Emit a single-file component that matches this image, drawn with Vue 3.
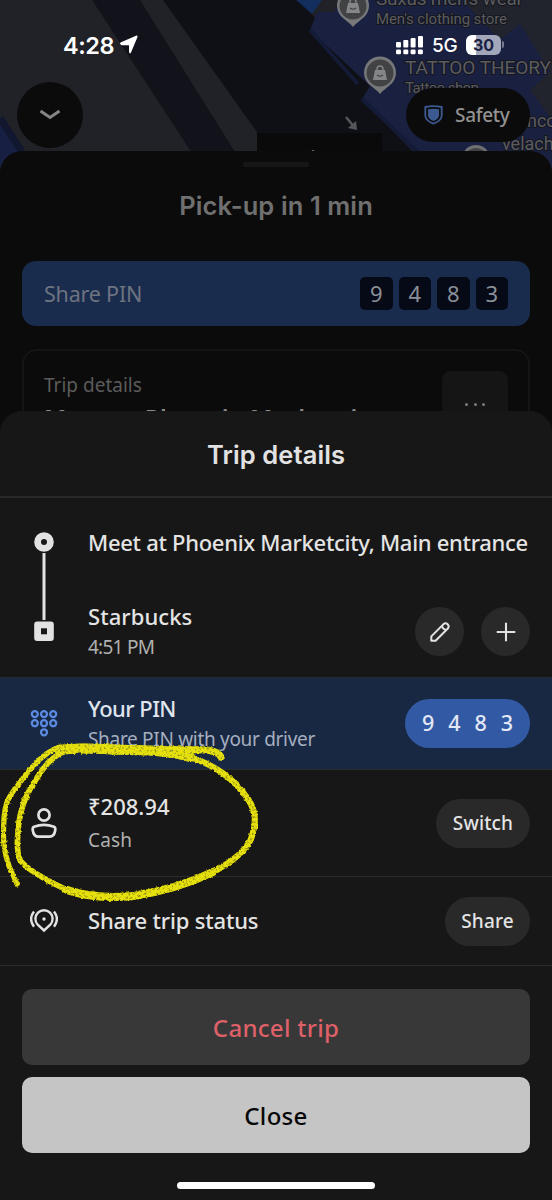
<script setup>
const pin = ['9', '4', '8', '3']
</script>

<template>
  <div class="screen">
    <svg class="map" viewBox="0 0 552 190" width="552" height="190">
      <rect width="552" height="190" fill="#202227" />
      <path d="M92 0H140L240 160V190H216Z" fill="#12131a" />
      <path d="M163 0H300L440 170H284Z" fill="#0e1015" />
      <path d="M0 118L24 152V190H0Z" fill="#171f42" />
      <path d="M0 118L22 152" stroke="#11172f" stroke-width="7" />
      <path d="M296 0H322L312 14L303 6Z" fill="#132d5c" />
      <path d="M318 10L328 0H525L552 30V190H450L362 99L370 86L310 30Z" fill="#1a2040" />
      <path d="M310 30L358 84M362 99L418 152" fill="none" stroke="#141b36" stroke-width="4" />
      <path d="M322 0H340L334 12L318 12Z" fill="#202227" />
      <path d="M418 0H552V75L520 24L500 40L462 0Z" fill="#22242d" />
      <path d="M530 90L552 70V120Z" fill="#22242d" />
      <path d="M257 133H382V160H257Z" fill="#0a0a0b" />
      <path d="M346 117L355 128" stroke="#55565a" stroke-width="2.500" fill="none" />
      <path d="M357 130L348 128L356 121Z" fill="#55565a" />
      <g v-for="p in [[353, 6], [380, 73]]" :key="p[1]" :transform="`translate(${p[0]} ${p[1]})`">
        <path d="M0 21C-3 17 -7 15 -10 12A16 16 0 1 1 10 12C7 15 3 17 0 21Z" fill="#77787a" />
        <circle r="13.5" fill="#414244" />
        <path d="M-5 -3H5L7 7H-7Z" fill="#858687" />
        <path d="M-3 -2V-4A3 3 0 0 1 3 -4V-2" stroke="#858687" stroke-width="1.4" fill="none" />
        <path d="M-3 2Q0 4.500 3 2" stroke="#414244" stroke-width="1.2" fill="none" />
      </g>
      <circle cx="476" cy="159" r="14" fill="#6e7072" />
      <circle cx="476" cy="160" r="12" fill="#414244" />
      <g class="maptext">
        <text x="376" y="5" class="big" textLength="147">Suxus men's wear</text>
        <text x="376" y="24" class="small" textLength="131">Men's clothing store</text>
        <text x="405" y="74" class="big" textLength="146">TATTOO THEORY</text>
        <text x="405" y="93" class="small" textLength="74">Tattoo shop</text>
        <text x="527" y="127" class="mid">nco</text>
        <text x="502" y="150" class="mid">velach</text>
      </g>
      <text x="268" y="163.500" class="eta">10 mins</text>
    </svg>

    <header class="status">
      <span class="time">4:28</span>
      <svg class="nav" width="20" height="20" viewBox="0 0 20 20">
        <path d="M1.500 9.200Q0 8 2 7.200L17 .7Q19.200 0 18.400 2.200L12 17.500Q10.800 19.500 10 17V10.200H3Q2 10.200 1.500 9.200Z" fill="#fff" />
      </svg>
      <svg class="bars" width="28" height="20" viewBox="0 0 28 20" fill="#fff">
        <rect x="0" y="7" width="5" height="5.500" rx="1" />
        <rect x="7.300" y="5" width="5" height="7.500" rx="1" />
        <rect x="14.600" y="3" width="5" height="9.500" rx="1" />
        <rect x="22" y="1" width="5" height="11.500" rx="1" />
        <rect v-for="i in 4" :key="i" :x="(i - 1) * 7.3" y="14.500" width="5" height="4.800" rx="1.300" />
      </svg>
      <span class="net">5G</span>
      <span class="battery">30</span>
      <i class="cap"></i>
    </header>

    <div class="topbar">
      <button class="back" aria-label="Back">
        <svg width="22" height="12" viewBox="0 0 22 12"><path d="M1.500 2L11 8.500L20.500 2" fill="none" stroke="#858585" stroke-width="3" /></svg>
      </button>
      <button class="safety">
        <svg width="19" height="20" viewBox="0 0 19 20">
          <path d="M1.300 2Q9.500 .2 17.700 2V11Q17 16 9.500 18.600Q2 16 1.300 11Z" fill="#0b0b0b" stroke="#3c5a91" stroke-width="1.800" />
          <path d="M4 4.300Q9.500 3 15 4.300V10.800Q14.500 14 9.500 16Q4.500 14 4 10.800Z" fill="#3c5a91" />
        </svg>
        <span>Safety</span>
      </button>
    </div>

    <section class="sheet">
      <div class="handle"></div>
      <h2>Pick-up in 1 min</h2>
      <div class="sharepin">
        <span>Share PIN</span>
        <div class="boxes"><b v-for="d in pin" :key="d">{{ d }}</b></div>
      </div>
      <div class="card">
        <div>
          <p>Trip details</p>
          <h3>Meet at Phoenix Marketcity</h3>
        </div>
        <div class="more"><i></i><i></i><i></i></div>
      </div>
    </section>

    <section class="modal">
      <h1>Trip details</h1>

      <div class="route">
        <svg class="rail" width="22" height="102" viewBox="0 0 22 102">
          <circle cx="11" cy="11" r="6.400" fill="none" stroke="#e2e2e2" stroke-width="6.800" />
          <path d="M11 22V89" stroke="#e2e2e2" stroke-width="3" />
          <rect x="1.200" y="90.500" width="19.600" height="19.600" rx="3" fill="#e2e2e2" />
          <rect x="8" y="97.300" width="6" height="6" fill="#171717" />
        </svg>
        <div class="stops">
          <p class="main place">Meet at Phoenix Marketcity, Main entrance</p>
          <p class="main star">Starbucks</p>
          <p class="sub arrive">4:51 PM</p>
        </div>
        <div class="tools">
          <button aria-label="Edit">
            <svg width="22" height="22" viewBox="0 0 22 22" fill="none" stroke="#e2e2e2" stroke-width="2" stroke-linejoin="round">
              <path d="M2.300 19.700V15.400L14.800 2.900Q16.700 1.400 18.600 3.200T19.100 7.200L6.600 19.700Z" />
              <path d="M13 4.700Q13.500 8.500 17.300 9" />
            </svg>
          </button>
          <button aria-label="Add">
            <svg width="20" height="20" viewBox="0 0 20 20"><path d="M10 .7V19.300M.7 10H19.300" stroke="#e2e2e2" stroke-width="2.100" /></svg>
          </button>
        </div>
      </div>

      <div class="row pinrow">
        <svg class="icon" width="28" height="28" viewBox="0 0 28 28" fill="none" stroke="#5b8ae0" stroke-width="2.300">
          <template v-for="y in 2" :key="y"><circle v-for="x in 3" :key="x" :cx="x * 9.2 - 4.4" :cy="y * 9.1 - 5" r="3" /></template>
          <circle cx="14" cy="22.300" r="3" />
        </svg>
        <div class="info">
          <p class="main yourpin">Your PIN</p>
          <p class="sub driver">Share PIN with your driver</p>
        </div>
        <div class="digits"><b v-for="d in pin" :key="d">{{ d }}</b></div>
      </div>

      <div class="row cashrow">
        <svg class="icon" width="28" height="32" viewBox="0 0 28 32" fill="none" stroke="#e2e2e2" stroke-width="2.700">
          <circle cx="14" cy="8" r="5.600" />
          <path d="M4 19.800Q14 16 24 19.800Q25.700 20.500 25.200 23.500Q24.300 29.700 19.500 29.700H8.500Q3.700 29.700 2.800 23.500Q2.300 20.500 4 19.800Z" />
        </svg>
        <div class="info">
          <p class="main price">₹208.94</p>
          <p class="sub cash">Cash</p>
        </div>
        <button class="pill switch">Switch</button>
      </div>

      <div class="row sharerow">
        <svg class="icon" width="28" height="24" viewBox="0 0 28 24" fill="none" stroke="#e2e2e2" stroke-width="2.400">
          <path d="M14 21.500L7.700 15.700A8.600 8.600 0 1 1 20.300 15.700Z" />
          <circle cx="14" cy="10" r="1.700" fill="#e2e2e2" stroke="none" />
          <path d="M4 2.500Q-1.800 10 4 17.800M24 2.500Q29.800 10 24 17.800" />
        </svg>
        <div class="info"><p class="main status-text">Share trip status</p></div>
        <button class="pill share">Share</button>
      </div>

      <div class="actions">
        <button class="cancel">Cancel trip</button>
        <button class="close">Close</button>
      </div>
      <div class="home"></div>
    </section>

    <svg class="marker" width="276" height="190" viewBox="0 725 276 190">
      <defs>
        <filter id="chalk" x="-5%" y="-5%" width="110%" height="110%">
          <feTurbulence type="fractalNoise" baseFrequency=".42" numOctaves="2" seed="4" result="n" />
          <feDisplacementMap in="SourceGraphic" in2="n" scale="3" xChannelSelector="R" yChannelSelector="G" result="d" />
          <feColorMatrix in="n" type="matrix" values="0 0 0 0 0  0 0 0 0 0  0 0 0 0 0  0 -4 0 0 3.100" result="m" />
          <feComposite in="d" in2="m" operator="in" result="grain" />
          <feComponentTransfer in="d" result="faint"><feFuncA type="linear" slope=".6" /></feComponentTransfer>
          <feMerge><feMergeNode in="faint" /><feMergeNode in="grain" /></feMerge>
        </filter>
      </defs>
      <g fill="none" stroke="#e6e00a" stroke-linecap="round" stroke-linejoin="round" filter="url(#chalk)">
        <path stroke-width="5" d="M60 747C45 751 32 766 21 781C9 796 5 802 4 818C3 838 3 850 9 866L17 884" />
        <path stroke-width="5.500" d="M63 752C52 757 44 766 37 778C28 791 22 803 19 822C17 838 16 852 20 860C27 870 50 882 67 890" />
        <path stroke-width="8" d="M67 890C90 898 112 898 133 896C160 892 190 883 213 872" />
        <path stroke-width="6" d="M213 872C232 862 245 852 251 839C257 822 256 811 248 799C235 780 218 766 190 757" />
        <path stroke-width="10" d="M60 750C80 746 105 750 130 750C155 750 175 752 190 757" />
        <path stroke-width="7" d="M130 749C160 750 185 749 206 750Q218 751 221 757" />
      </g>
    </svg>
  </div>
</template>

<style>
body { margin: 0; background: #171717; }
</style>

<style scoped>
.screen { position: relative; width: 552px; height: 1200px; overflow: hidden; background: #0b0b0b; font-family: "Noto Sans", "Open Sans", sans-serif; display: flex; flex-direction: column; }
h1, h2, h3, p { margin: 0; white-space: nowrap; }
button { border: 0; padding: 0; font-family: inherit; white-space: nowrap; display: flex; align-items: center; justify-content: center; }
svg { display: block; flex: none; }
.map { position: absolute; left: 0; top: 0; }
.maptext { font-family: Roboto, sans-serif; fill: #5b5c60; stroke: #15161c; stroke-width: 2px; paint-order: stroke; }
.big { font-size: 19px; }
.mid { font-size: 18px; }
.small { font-size: 15px; }
.eta { font-size: 18px; font-weight: 600; fill: #777; }

.status { position: relative; height: 82px; display: flex; align-items: center; padding: 7px 0 0 63px; box-sizing: border-box; font-family: Inter, sans-serif; color: #fff; }
.time { font-size: 23.500px; font-weight: 600; width: 56px; line-height: 30px; letter-spacing: -.4px; padding-top: 2px; }
.bars { margin-left: 257px; }
.net { font-size: 19px; width: 34px; margin-left: 8px; letter-spacing: -.2px; font-weight: 500; padding-top: 2px; }
.battery { width: 35px; height: 20px; border-radius: 6px; background: linear-gradient(90deg, #fff 30%, #a3a7ba 30%); color: #1b2142; font-size: 16px; line-height: 20px; font-weight: 700; text-align: center; }
.cap { width: 2px; height: 7px; margin-left: 1px; border-radius: 0 2px 2px 0; background: #777b8e; }

.topbar { position: relative; height: 69px; padding: 0 22px 0 17px; display: flex; justify-content: space-between; align-items: flex-start; }
.back { width: 66px; height: 66px; border-radius: 50%; background: #0b0b0b; }
.safety { width: 124px; height: 54px; margin-top: 6px; border-radius: 27px; background: #0b0b0b; color: #929292; gap: 12px; font-size: 19px; letter-spacing: -.3px; font-weight: 500; justify-content: flex-start; padding-left: 18px; box-sizing: border-box; }

.sheet { position: relative; flex: 1; border-radius: 22px 22px 0 0; background: #0b0b0b; padding: 11px 22px 0; display: flex; flex-direction: column; }
.handle { width: 66px; height: 5px; border-radius: 2px; background: #171717; align-self: center; }
h2 { text-align: center; margin-top: 23px; font: 600 25.500px/32px Inter, sans-serif; color: #707070; letter-spacing: .1px; }
.sharepin { height: 65px; margin-top: 39px; border-radius: 14px; background: #1a2c4e; padding: 0 22px; display: flex; align-items: center; justify-content: space-between; color: #6d7480; font-size: 21.500px; letter-spacing: -.2px; }
.boxes { display: flex; gap: 6px; }
.boxes b { width: 32.500px; height: 33px; border-radius: 5px; background: #050a16; color: #8a8f98; font-weight: 400; font-size: 22px; line-height: 32px; text-align: center; letter-spacing: 0; }
.card { height: 120px; margin-top: 23px; border: 2px solid #151515; border-radius: 15px; padding: 20px 20px 0; display: flex; justify-content: space-between; }
.card p { color: #5b5b5b; font-size: 19px; line-height: 27px; padding-top: 1px; }
.card h3 { font-size: 24px; line-height: 30px; color: #8a8a8a; margin-top: 4px; font-weight: 600; letter-spacing: .55px; }
.more { width: 66px; height: 66px; border-radius: 9px; background: #151515; display: flex; gap: 5.500px; align-items: center; justify-content: center; }
.more i { width: 3px; height: 3px; border-radius: 50%; background: #7a7a7a; }

.modal { position: absolute; left: 0; right: 0; top: 411px; bottom: 0; border-radius: 22px 22px 0 0; background: #171717; display: flex; flex-direction: column; }
h1 { height: 85px; border-bottom: 2px solid #292929; text-align: center; font: 600 25.500px/87px Inter, sans-serif; color: #e2e2e2; letter-spacing: .1px; }
.route { height: 179px; display: flex; padding: 0 22px 0 33px; box-sizing: border-box; position: relative; }
.rail { margin-top: 33px; overflow: visible; }
.stops { margin-left: 33px; flex: 1; width: 0; }
.main { font-size: 22px; line-height: 30px; font-weight: 500; color: #e4e4e4; }
.sub { font-size: 19px; line-height: 26px; color: #b0b0b0; }
.place { margin-top: 29px; letter-spacing: -.29px; }
.star { margin-top: 44px; letter-spacing: .08px; }
.arrive { margin-top: 3px; letter-spacing: -.75px; }
.tools { display: flex; gap: 17px; margin-top: 109px; }
.tools button { width: 49px; height: 49px; border-radius: 50%; background: #292929; }
.row { display: flex; align-items: center; padding: 0 22px 0 30px; border-bottom: 1px solid #2c2c2c; box-sizing: border-box; position: relative; }
.icon { width: 28px; }
.info { margin-left: 30px; flex: 1; }
.pinrow { height: 93px; background: #182843; border-top: 1px solid #252a30; }
.pinrow .info, .cashrow .info { padding-bottom: 3px; }
.yourpin { color: #dfe4ee; letter-spacing: -.55px; }
.driver { color: #a5afbf; margin-top: 3px; letter-spacing: -.31px; }
.digits { width: 125px; height: 49px; border-radius: 25px; background: #3259a4; display: flex; justify-content: center; align-items: center; }
.digits b { width: 26.300px; text-align: center; font-weight: 500; font-size: 21.500px; line-height: 30px; padding-bottom: 2px; color: #e2e8f6; }
.cashrow { height: 107px; }
.cash { margin-top: 6px; letter-spacing: .2px; }
.pill { height: 49px; border-radius: 25px; background: #292929; color: #e4e4e4; font-size: 19px; font-weight: 500; letter-spacing: .15px; }
.switch { width: 94px; }
.share { width: 85px; }
.sharerow { height: 89px; }
.sharerow .info { padding-bottom: 2px; }
.status-text { letter-spacing: -.18px; }
.actions { display: flex; flex-direction: column; gap: 12px; padding: 23px 22px 0; }
.actions button { height: 76px; border-radius: 10px; font-size: 24px; font-weight: 500; letter-spacing: .3px; }
.cancel { background: #383838; color: #de6068; }
.close { background: #c5c5c5; color: #080808; }
.home { width: 198px; height: 7px; border-radius: 4px; background: #fff; margin: 29px auto 0; }
.marker { position: absolute; left: 0; top: 725px; }
</style>
